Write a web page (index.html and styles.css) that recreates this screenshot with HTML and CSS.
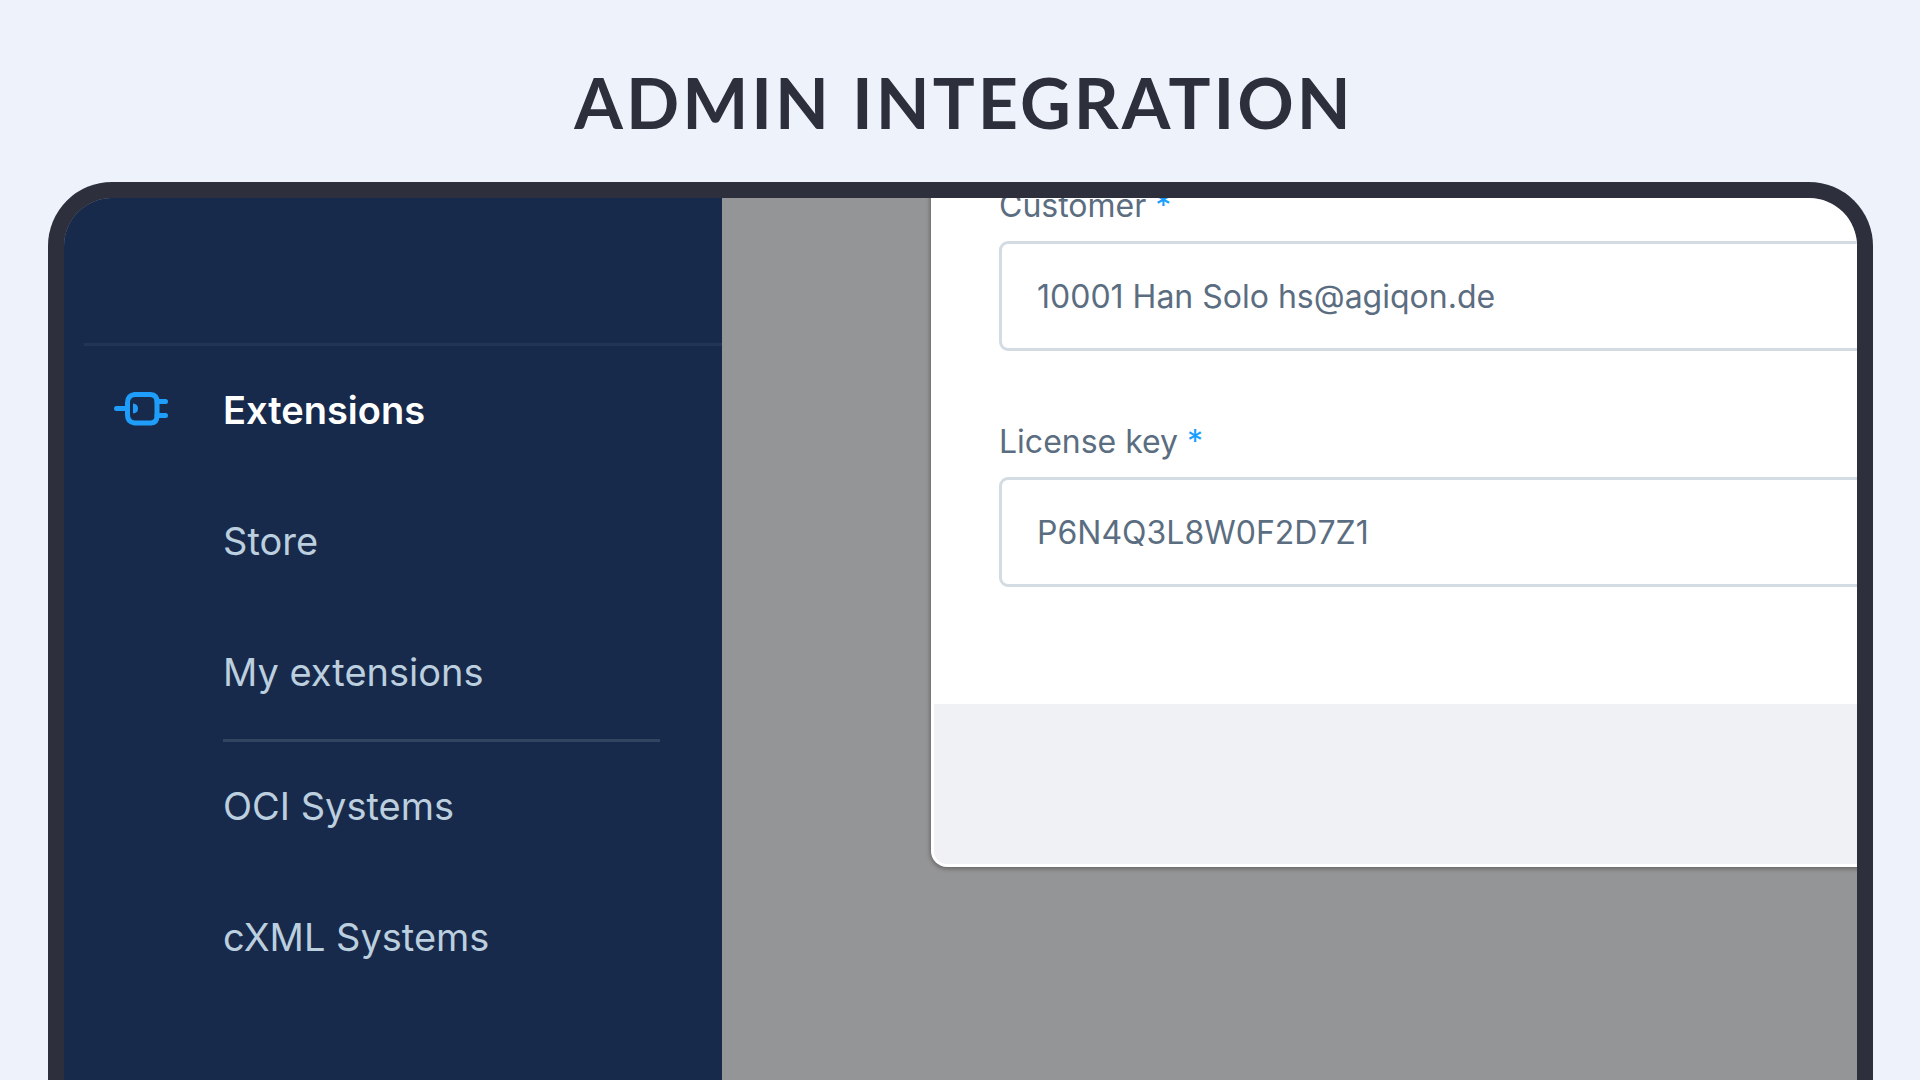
FILE: index.html
```html
<!DOCTYPE html>
<html lang="en">
<head>
<meta charset="utf-8">
<title>Admin Integration</title>
<link rel="stylesheet" href="styles.css">
</head>
<body>
<h1 class="title">ADMIN INTEGRATION</h1>
<main class="device">
  <nav class="sidebar">
    <div class="sidebar-rule"></div>
    <a class="nav-item nav-head" href="#">
      <svg class="plug" viewBox="0 0 56 36" fill="none" stroke="#1f9dfb" stroke-width="5" stroke-linecap="round" stroke-linejoin="round" aria-hidden="true">
        <path d="M2.500 16.500H13M43 9.500H51.500M43 23.500H51.500"/>
        <path d="M20.500 2.500H36.500Q43 3 43 9.500V24Q43 30.500 37 31H20.500Q13.500 30 13.500 23V10.500Q13.500 3.500 20.500 2.500Z"/>
        <path d="M19 11.500Q24 12 24 16.500T19 21.500Z" fill="#1f9dfb" stroke="none"/>
      </svg>
      <span>Extensions</span>
    </a>
    <a class="nav-item" href="#">Store</a>
    <a class="nav-item" href="#">My extensions</a>
    <hr class="nav-rule">
    <a class="nav-item" href="#">OCI Systems</a>
    <a class="nav-item" href="#">cXML Systems</a>
  </nav>
  <section class="stage">
    <form class="modal">
      <div class="modal-body">
        <div class="field">
          <label for="customer">Customer <span class="required">*</span></label>
          <input id="customer" type="text" value="10001 Han Solo hs@agiqon.de">
        </div>
        <div class="field">
          <label for="license">License key <span class="required">*</span></label>
          <input id="license" type="text" value="P6N4Q3L8W0F2D7Z1">
        </div>
      </div>
      <div class="modal-footer"></div>
    </form>
  </section>
</main>
</body>
</html>
```
FILE: styles.css
```css
* {
  box-sizing: border-box;
}

body {
  margin: 0;
  min-height: 100vh;
  display: flex;
  flex-direction: column;
  background: #eef3fb;
  font-family: Inter, "Liberation Sans", sans-serif;
}

.title {
  margin: 0;
  padding: 60px 0 38px 8px;
  font: 700 70px/84px Lato, "Liberation Sans", sans-serif;
  letter-spacing: 3px;
  text-align: center;
  color: #2d303c;
}

.device {
  flex: 1;
  display: flex;
  margin: 0 47px 0 48px;
  border: 16px solid #2d303c;
  border-bottom: 0;
  border-radius: 64px 64px 0 0;
  background: #949596;
  overflow: hidden;
}

.sidebar {
  flex: none;
  width: 658px;
  padding-top: 145px;
  background: #182a4c;
}

.sidebar-rule {
  height: 3px;
  margin-left: 20px;
  background: #233556;
}

.nav-item {
  display: flex;
  align-items: center;
  height: 131px;
  padding: 0 0 4px 159px;
  font-size: 38px;
  line-height: 48px;
  color: #bccfdf;
  text-decoration: none;
}

.nav-head {
  gap: 53px;
  padding-left: 50px;
  font-weight: 600;
  color: #fff;
}

.plug {
  width: 56px;
  height: 36px;
}

.nav-rule {
  height: 3px;
  margin: 0 62px 0 159px;
  border: 0;
  background: #324560;
}

.stage {
  flex: 1;
  min-width: 0;
  padding-left: 209px;
}

.modal {
  margin: -13px -100px 0 0;
  border: 3px solid #fff;
  border-top: 0;
  border-radius: 0 0 16px 16px;
  background: #fff;
  box-shadow: 0 1px 4px 1px #666;
  overflow: hidden;
}

.modal-body {
  display: flex;
  flex-direction: column;
  gap: 70px;
  padding: 0 0 117px 65px;
}

.field {
  display: flex;
  flex-direction: column;
  gap: 14px;
}

.field label {
  font-size: 32px;
  line-height: 42px;
  color: #5b6d80;
}

.required {
  color: #189eff;
}

.field input {
  height: 110px;
  padding: 0 35px;
  border: 3px solid #d3dbe3;
  border-radius: 9px;
  background: #fff;
  font: 32px/42px Inter, "Liberation Sans", sans-serif;
  color: #5b6d80;
}

.modal-footer {
  height: 160px;
  background: #f0f1f5;
}
```
